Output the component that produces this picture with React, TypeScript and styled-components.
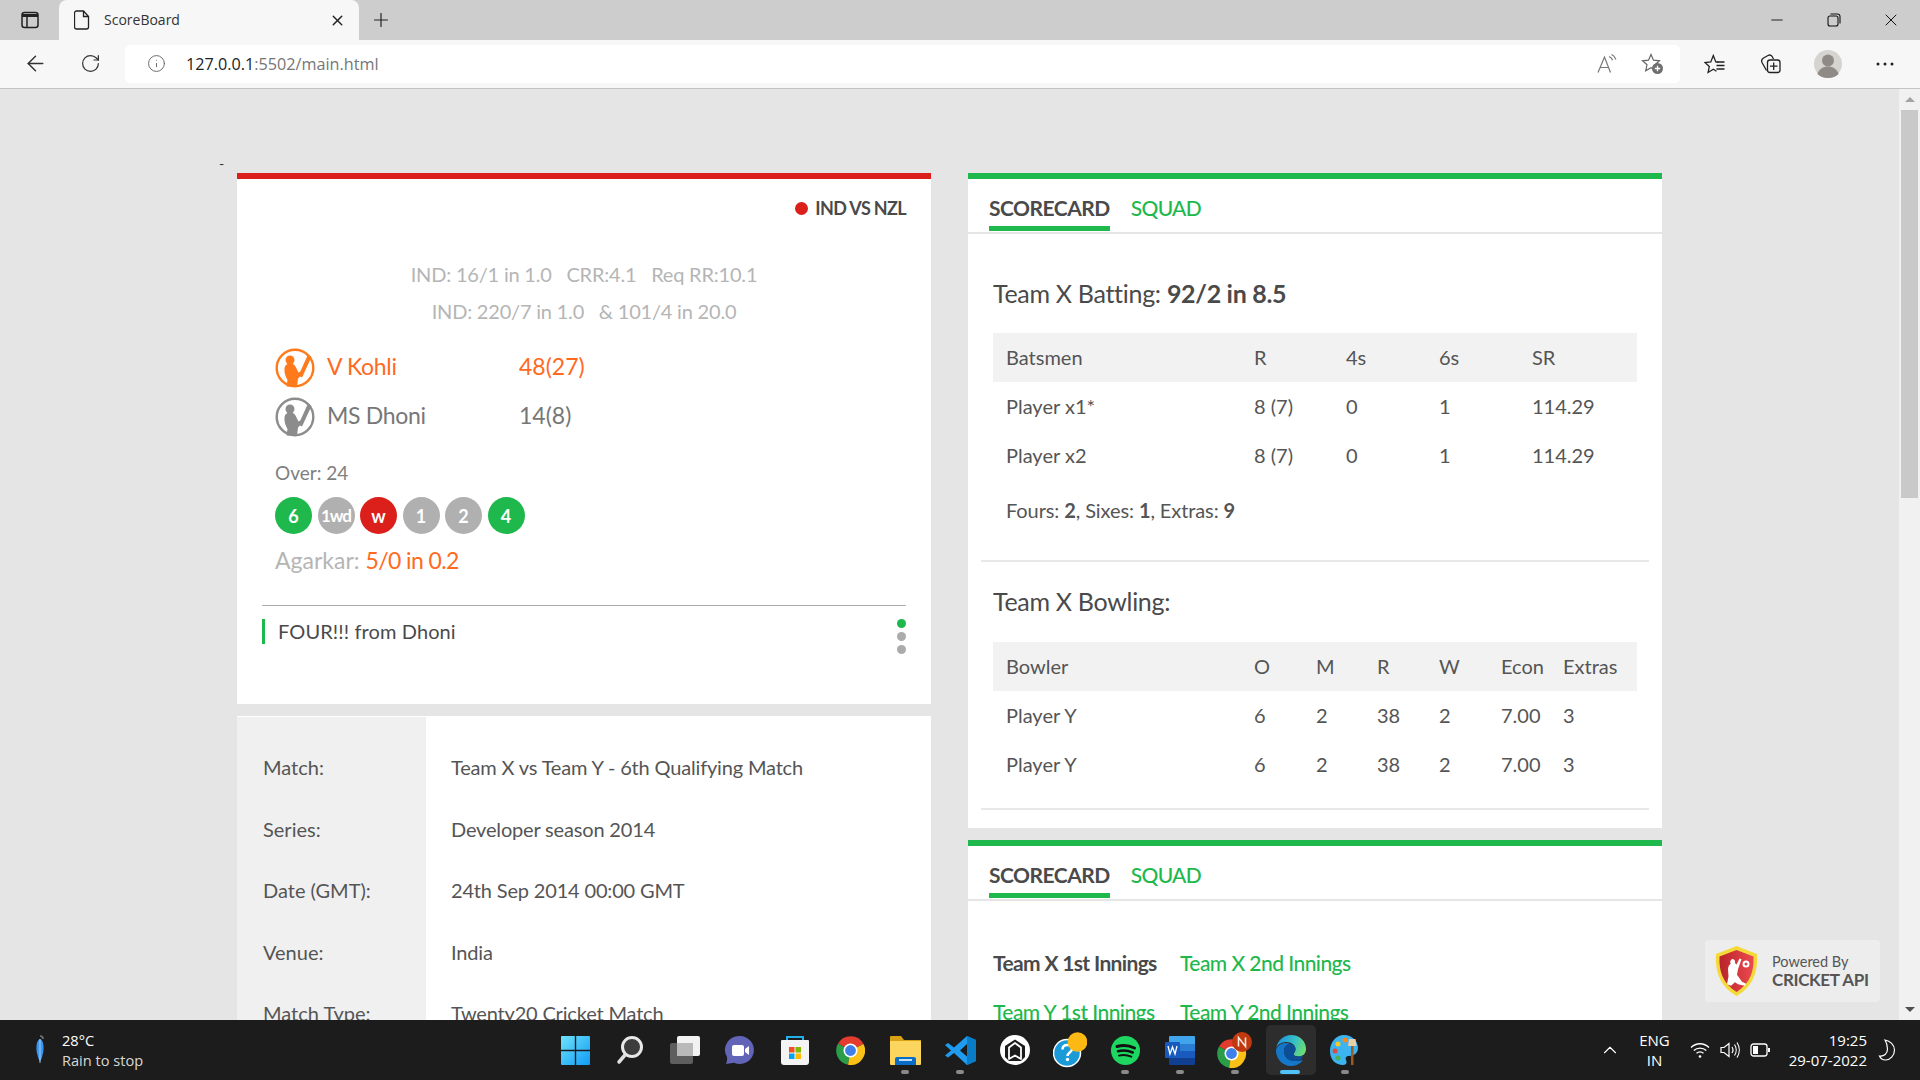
import React from "react";
import styled, { createGlobalStyle } from "styled-components";
import { ArrowLeft, RotateCw, Info, X, Plus, Minus, ChevronUp } from "lucide-react";

const GREEN = "#1fb84d";
const RED = "#db1f1a";
const ORANGE = "#ff6a1f";

const GlobalStyle = createGlobalStyle`
  html, body {
    margin: 0;
    padding: 0;
    height: 100%;
    overflow: hidden;
    background: #e5e5e5;
  }
  * {
    box-sizing: border-box;
  }
`;

const Shell = styled.div`
  width: 100vw;
  height: 100vh;
  display: flex;
  flex-direction: column;
  overflow: hidden;
  font-family: "Lato", "Liberation Sans", sans-serif;
`;

/* browser chrome */
const TabStrip = styled.div`
  height: 40px;
  flex: none;
  display: flex;
  align-items: flex-end;
  background: #cdcdcd;
  font-family: "Open Sans", "Liberation Sans", sans-serif;
`;

const StripButton = styled.div<{ $w: number }>`
  width: ${(p) => p.$w}px;
  height: 40px;
  flex: none;
  display: flex;
  align-items: center;
  justify-content: center;
  color: #222;
`;

const BrowserTab = styled.div`
  width: 300px;
  height: 40px;
  flex: none;
  display: flex;
  align-items: center;
  padding: 0 13px 0 15px;
  background: #f7f7f7;
  border-radius: 8px 8px 0 0;
  color: #333;
  font-size: 14px;
`;

const TabTitle = styled.span`
  margin: 0 0 2px 14px;
  flex: 1;
`;

const WindowButtons = styled.div`
  margin-left: auto;
  display: flex;
  align-items: center;
  height: 40px;
`;

const WindowButton = styled.div<{ $w: number }>`
  width: ${(p) => p.$w}px;
  display: flex;
  justify-content: center;
  color: #111;
`;

const Toolbar = styled.div`
  height: 49px;
  flex: none;
  display: flex;
  align-items: center;
  background: #f7f7f7;
  border-bottom: 1px solid #c4c4c4;
  padding-bottom: 1px;
`;

const ToolButton = styled.div<{ $w: number }>`
  width: ${(p) => p.$w}px;
  flex: none;
  display: flex;
  justify-content: center;
  align-items: center;
  color: #333;
`;

const AddressBar = styled.div`
  width: 1555px;
  height: 38px;
  flex: none;
  display: flex;
  align-items: center;
  margin-left: 15px;
  padding: 0 16px 0 22px;
  background: #fff;
  border-radius: 5px;
  font-family: "Open Sans", "Liberation Sans", sans-serif;
  font-size: 16.2px;
  color: #767676;
`;

const UrlHost = styled.span`
  margin-left: 20px;
  color: #222;
`;

const AddressActions = styled.div`
  margin-left: auto;
  display: flex;
  align-items: center;
  gap: 22px;
`;

/* page */
const Viewport = styled.div`
  flex: 1;
  min-height: 0;
  display: flex;
  position: relative;
  overflow: hidden;
  background: #e5e5e5;
`;

const Page = styled.main`
  flex: 1;
  min-width: 0;
  padding: 68px 0 0 237px;
  overflow: hidden;
`;

const Dash = styled.div`
  height: 16px;
  margin-left: -18px;
  font-size: 14px;
  line-height: 14px;
  color: #333;
`;

const Columns = styled.div`
  display: flex;
  gap: 37px;
  align-items: flex-start;
`;

const Column = styled.div`
  width: 694px;
  flex: none;
  display: flex;
  flex-direction: column;
  gap: 12px;
`;

const Scrollbar = styled.div`
  width: 21px;
  flex: none;
  display: flex;
  flex-direction: column;
  align-items: center;
  background: #f1f1f1;
`;

const ScrollThumb = styled.div`
  width: 17px;
  height: 388px;
  background: #c9c9c9;
`;

const ScrollArrow = styled.div<{ $up?: boolean }>`
  height: 21px;
  flex: none;
  display: flex;
  align-items: center;
  &::before {
    content: "";
    border-left: 5px solid transparent;
    border-right: 5px solid transparent;
    ${(p) =>
      p.$up ? "border-bottom: 5px solid #a3a3a3;" : "border-top: 5px solid #505050;"}
  }
`;

const ScrollSpacer = styled.div`
  flex: 1;
`;

const Card = styled.section<{ $accent?: string }>`
  background: #fff;
  ${(p) => p.$accent && `border-top: 6px solid ${p.$accent};`}
`;

const MatchBody = styled.div`
  padding: 17px 25px 50px;
  color: #555;
`;

const LiveTag = styled.div`
  display: flex;
  justify-content: flex-end;
  align-items: center;
  gap: 7px;
  height: 24px;
  font-size: 18px;
  font-weight: 700;
  letter-spacing: -0.65px;
  color: #4a4a4a;
`;

const LiveDot = styled.span`
  width: 13px;
  height: 13px;
  border-radius: 50%;
  background: ${RED};
`;

const ScoreLines = styled.div`
  margin-top: 36px;
  text-align: center;
  color: #b5b5b5;
  font-size: 20px;
  line-height: 37px;
  letter-spacing: -0.2px;
  white-space: pre;
`;

const Players = styled.div`
  margin-top: 13px;
  padding-left: 13px;
`;

const PlayerRow = styled.div<{ $on?: boolean }>`
  height: 49px;
  display: flex;
  align-items: center;
  font-size: 23px;
  color: ${(p) => (p.$on ? ORANGE : "#777")};
`;

const PlayerName = styled.span`
  width: 192px;
  margin: 0 0 3px 12px;
  letter-spacing: -0.3px;
`;

const PlayerScore = styled.span`
  margin-bottom: 3px;
`;

const OverLabel = styled.div`
  margin: 20px 0 0 13px;
  font-size: 19px;
  line-height: 24px;
  color: #808080;
`;

const Balls = styled.div`
  display: flex;
  gap: 5.5px;
  margin: 12px 0 0 13px;
`;

const Ball = styled.span<{ $bg: string; $small?: boolean }>`
  width: 37px;
  height: 37px;
  border-radius: 50%;
  display: flex;
  align-items: center;
  justify-content: center;
  background: ${(p) => p.$bg};
  color: #fff;
  font-weight: 700;
  font-size: ${(p) => (p.$small ? "17px" : "18px")};
  letter-spacing: ${(p) => (p.$small ? "-1px" : "0")};
`;

const BowlerLine = styled.div`
  margin: 11px 0 0 13px;
  font-size: 23px;
  line-height: 30px;
  color: #b5b5b5;
`;

const Hot = styled.span`
  color: ${ORANGE};
  letter-spacing: -0.6px;
`;

const FeedRow = styled.div`
  margin-top: 30px;
  padding-top: 13px;
  border-top: 1px solid #ababab;
  display: flex;
  justify-content: space-between;
  align-items: flex-start;
`;

const FeedText = styled.div`
  height: 25px;
  padding-left: 13px;
  border-left: 3px solid ${GREEN};
  font-size: 20px;
  line-height: 25px;
  letter-spacing: 0.1px;
  color: #4a4a4a;
`;

const Pager = styled.div`
  display: flex;
  flex-direction: column;
  gap: 4px;
`;

const PagerDot = styled.span<{ $on?: boolean }>`
  width: 9px;
  height: 9px;
  border-radius: 50%;
  background: ${(p) => (p.$on ? GREEN : "#ababab")};
`;

const InfoGrid = styled.div`
  display: grid;
  grid-template-columns: 189px 1fr;
  padding-top: 1px;
  background: #fff;
`;

const InfoColumn = styled.div<{ $label?: boolean }>`
  padding: 19.5px 0 0 ${(p) => (p.$label ? "26px" : "25px")};
  background: ${(p) => (p.$label ? "#f0f0f0" : "#fff")};
  font-size: 20px;
  letter-spacing: ${(p) => (p.$label ? "0" : "-0.17px")};
  color: #555;
`;

const InfoCell = styled.div`
  height: 61.5px;
  display: flex;
  align-items: center;
`;

const Tabs = styled.div`
  height: 55px;
  display: flex;
  gap: 21px;
  padding-left: 21px;
  border-bottom: 2px solid #e5e5e5;
`;

const TabLink = styled.div<{ $on?: boolean }>`
  height: 52px;
  padding-top: 11px;
  font-size: 21px;
  line-height: 36px;
  font-weight: ${(p) => (p.$on ? 700 : 500)};
  letter-spacing: ${(p) => (p.$on ? "-0.5px" : "-0.7px")};
  color: ${(p) => (p.$on ? "#4a4a4a" : GREEN)};
  border-bottom: ${(p) => (p.$on ? `5px solid ${GREEN}` : "none")};
`;

const Section = styled.div<{ $top: number; $bottom?: number }>`
  padding: ${(p) => p.$top}px 25px ${(p) => p.$bottom ?? 0}px;
`;

const SectionTitle = styled.h2`
  margin: 0;
  font-size: 25px;
  line-height: 30px;
  font-weight: 400;
  letter-spacing: -0.3px;
  color: #4a4a4a;
`;

const Strong = styled.strong`
  font-weight: 700;
`;

const ScoreTable = styled.div<{ $mt: number }>`
  margin-top: ${(p) => p.$mt}px;
  font-size: 20px;
  color: #555;
`;

const TableRow = styled.div<{ $cols: string; $head?: boolean }>`
  height: 49px;
  display: grid;
  grid-template-columns: ${(p) => p.$cols};
  align-items: center;
  padding: 0 0 2px 13px;
  background: ${(p) => (p.$head ? "#f2f2f2" : "#fff")};
`;

const Summary = styled.div`
  margin-top: 15px;
  padding-left: 13px;
  font-size: 20px;
  line-height: 30px;
  letter-spacing: -0.1px;
  color: #555;
`;

const Rule = styled.hr<{ $mt: number }>`
  height: 2px;
  margin: ${(p) => p.$mt}px 13px 0;
  border: 0;
  background: #e8e8e8;
`;

const InningsRow = styled.div`
  height: 49px;
  display: flex;
  align-items: center;
  gap: 25px;
  font-size: 21px;
  white-space: nowrap;
`;

const InningsLink = styled.span<{ $on?: boolean }>`
  width: 162px;
  font-weight: ${(p) => (p.$on ? 700 : 500)};
  letter-spacing: ${(p) => (p.$on ? "-0.65px" : "-0.55px")};
  color: ${(p) => (p.$on ? "#4a4a4a" : GREEN)};
`;

const PoweredBadge = styled.div`
  position: absolute;
  right: 40px;
  bottom: 18px;
  width: 175px;
  height: 62px;
  display: flex;
  align-items: center;
  gap: 14px;
  padding-left: 10px;
  background: #ededed;
  border-radius: 4px;
  color: #555;
`;

const BadgeText = styled.div`
  display: flex;
  flex-direction: column;
  font-size: 14.5px;
  line-height: 18px;
`;

const BadgeStrong = styled.span`
  font-size: 17px;
  font-weight: 700;
  letter-spacing: -0.35px;
`;

/* taskbar */
const Taskbar = styled.footer`
  height: 60px;
  flex: none;
  position: relative;
  display: flex;
  align-items: center;
  justify-content: center;
  background: #1c1c1c;
  color: #fff;
  font-family: "Open Sans", "Liberation Sans", sans-serif;
  font-size: 15px;
`;

const Weather = styled.div`
  position: absolute;
  left: 32px;
  top: 0;
  height: 60px;
  display: flex;
  align-items: center;
  gap: 14px;
  font-size: 14.6px;
`;

const WeatherText = styled.div`
  display: flex;
  flex-direction: column;
  line-height: 20px;
`;

const WeatherSub = styled.span`
  color: #d8d8d8;
`;

const TaskItem = styled.div<{ $active?: boolean }>`
  position: relative;
  width: 55px;
  height: 60px;
  flex: none;
  display: flex;
  align-items: center;
  justify-content: center;
  &::before {
    content: "";
    position: absolute;
    left: 3px;
    right: 2px;
    top: 5px;
    bottom: 5px;
    border-radius: 5px;
    background: ${(p) => (p.$active ? "#2d2d2d" : "transparent")};
  }
  & > svg {
    position: relative;
  }
`;

const RunDot = styled.span<{ $active?: boolean }>`
  position: absolute;
  bottom: 6px;
  left: 50%;
  width: ${(p) => (p.$active ? "20px" : "8px")};
  height: 4px;
  margin-left: ${(p) => (p.$active ? "-10px" : "-4px")};
  border-radius: 2px;
  background: ${(p) => (p.$active ? "#4fc3f7" : "#8a8a8a")};
`;

const Tray = styled.div`
  position: absolute;
  right: 24px;
  top: 0;
  height: 60px;
  display: flex;
  align-items: center;
`;

const TrayLines = styled.div<{ $right?: boolean }>`
  display: flex;
  flex-direction: column;
  align-items: ${(p) => (p.$right ? "flex-end" : "center")};
  line-height: 20px;
  margin: ${(p) => (p.$right ? "0 11px 0 19px" : "0 20px 0 18px")};
`;

const TrayIcons = styled.div`
  display: flex;
  align-items: center;
  gap: 10px;
`;

/* drawings */
const BatterIcon = ({ color }: { color: string }) => (
  <svg width="40" height="40" viewBox="0 0 40 40">
    <circle cx="20" cy="20" r="18.300" fill="none" stroke={color} strokeWidth="2.400" />
    <circle cx="15" cy="12" r="4.500" fill={color} />
    <path
      d="M9.500 20c.5-3 2.500-4.500 5.500-4.500s5 1.500 6 4l2.500 5 3-1.500 1 3-4.500 4.500-1 8.500-10.500-.5 1-6.500c-2-3.500-3.500-7.500-3-12z"
      fill={color}
    />
    <path d="M33 6.500l3.500 2.500-9.500 20.500-3.500-2z" fill={color} />
  </svg>
);

const ShieldLogo = () => (
  <svg width="43" height="50" viewBox="0 0 43 50">
    <defs>
      <linearGradient id="shieldRed" x1="0" x2="1" y1="0" y2="0">
        <stop offset="0" stopColor="#b8232a" />
        <stop offset="1" stopColor="#ec4a4f" />
      </linearGradient>
    </defs>
    <path d="M21.500 0L42 8c1 16-3 32-20.500 42C4 40 0 24 1 8z" fill="#f4d93a" />
    <path d="M21.500 4L38.500 10.500c.7 14-3 27-17 35.500C7.500 37.500 3.800 24.500 4.500 10.500z" fill="url(#shieldRed)" />
    <path
      d="M17 13c2.500 0 3.500 2 3 4l1.500 1.500 3-6 2 .8-3.500 10-1 5.500 5 7 4 2-1 2-7-1.500-3-2-4 3.500-4-1.500 1.500-8-.5-7c.2-3 1.500-5 2.800-5.500-1-1-.9-3.300 1.200-4.800z"
      fill="#fff"
    />
    <circle cx="31" cy="18" r="2.500" fill="none" stroke="#fff" strokeWidth="2" />
  </svg>
);

const SidebarIcon = () => (
  <svg width="18" height="18" viewBox="0 0 18 18" fill="none" stroke="#222" strokeWidth="1.500">
    <rect x="1" y="1.500" width="16" height="15" rx="2.500" />
    <path d="M1 4.500h16" strokeWidth="3" />
    <path d="M6 5v11" />
  </svg>
);

const DocIcon = () => (
  <svg width="16" height="20" viewBox="0 0 16 20" fill="none" stroke="#222" strokeWidth="1.300">
    <path d="M2.500 1h7l5 5.500v10.500a2 2 0 0 1-2 2h-10a2 2 0 0 1-2-2v-14a2 2 0 0 1 2-2z" />
    <path d="M9.500 1v5.500h5" />
  </svg>
);

const RestoreIcon = () => (
  <svg width="14" height="14" viewBox="0 0 14 14" fill="none" stroke="#111" strokeWidth="1.100">
    <rect x="1" y="3" width="10" height="10" rx="2" />
    <path d="M3.500 1h7a2.500 2.500 0 0 1 2.500 2.500v7" />
  </svg>
);

const ReadAloudIcon = () => (
  <svg width="22" height="20" viewBox="0 0 22 20" fill="none" stroke="#777" strokeWidth="1.200">
    <path d="M1 18.500L7.500 3l6 15.500M3.300 13.500h8.500" />
    <path d="M12 2.500c1.800.7 3 2 3.600 3.800M14.500 0.500c2.200 1 3.700 2.800 4.400 5" />
  </svg>
);

const StarPlusIcon = () => (
  <svg width="23" height="22" viewBox="0 0 23 22">
    <path
      d="M10 1.500l2.500 5.700 6 .6-4.500 4 1.300 6-5.300-3-5.300 3 1.300-6-4.500-4 6-.6z"
      fill="none"
      stroke="#666"
      strokeWidth="1.200"
    />
    <circle cx="16.500" cy="15.500" r="5.500" fill="#6e6e6e" />
    <path d="M16.500 12.800v5.400M13.800 15.500h5.400" stroke="#fff" strokeWidth="1.300" />
  </svg>
);

const FavoritesIcon = () => (
  <svg width="22" height="20" viewBox="0 0 22 20" fill="none" stroke="#222" strokeWidth="1.300">
    <path d="M14.300 8.200l-2.500-.3L9.300 1.500 6.800 7.900 1 8.500l4.300 4-1.200 6 5.200-3.200 3.200 2" />
    <path d="M12.500 8h8M12.500 11.500h8M12.500 15h8" />
  </svg>
);

const CollectionsIcon = () => (
  <svg width="21" height="21" viewBox="0 0 21 21" fill="none" stroke="#222" strokeWidth="1.300">
    <path d="M6.500 17.500L2 9.500c-1-2 0-3.500 1.500-4.500L8 2.500c1.500-.8 3-.5 4 .8L13.500 6" />
    <rect x="7.500" y="7" width="12.500" height="12.500" rx="2.500" />
    <path d="M13.700 9.500v7.500M10 13.200h7.500" />
  </svg>
);

const AvatarIcon = () => (
  <svg width="28" height="28" viewBox="0 0 28 28">
    <circle cx="14" cy="14" r="14" fill="#d6d4d0" />
    <circle cx="14" cy="10.500" r="6" fill="#8f8a85" />
    <path d="M3.500 24c1.500-5 5.500-7.500 10.500-7.500s9 2.500 10.500 7.500c-2.500 2.500-6 4-10.500 4s-8-1.500-10.500-4z" fill="#8f8a85" />
  </svg>
);

const DotsIcon = () => (
  <svg width="18" height="4" viewBox="0 0 18 4" fill="#222">
    <circle cx="2" cy="2" r="1.500" />
    <circle cx="9" cy="2" r="1.500" />
    <circle cx="16" cy="2" r="1.500" />
  </svg>
);

const UmbrellaIcon = () => (
  <svg width="16" height="30" viewBox="0 0 16 30">
    <path d="M8 1c2 0 3 1 3 3" fill="none" stroke="#777" strokeWidth="1.500" />
    <path d="M8 4c-2 .5-4 4-3.500 11 .3 4 2 9 3.500 12 1.500-3 3.200-8 3.500-12 .5-7-1.500-10.500-3.500-11z" fill="#3a95ee" />
    <path d="M8 4v24" stroke="#bfe0ff" strokeWidth="0.800" />
  </svg>
);

const WindowsIcon = () => (
  <svg width="29" height="29" viewBox="0 0 29 29">
    <defs>
      <linearGradient id="winBlue" x1="0" x2="1" y1="0" y2="1">
        <stop offset="0" stopColor="#6fe3fb" />
        <stop offset="1" stopColor="#0f9bf5" />
      </linearGradient>
    </defs>
    <path d="M1 0h12.800v13.800H0V1a1 1 0 0 1 1-1zM15.200 0H28a1 1 0 0 1 1 1v12.800H15.200zM0 15.200h13.800V29H1a1 1 0 0 1-1-1zM15.200 15.200H29V28a1 1 0 0 1-1 1H15.200z" fill="url(#winBlue)" />
  </svg>
);

const SearchIcon = () => (
  <svg width="28" height="30" viewBox="0 0 28 30" fill="none">
    <circle cx="16" cy="12" r="9.500" fill="#3c3c3c" stroke="#e8e8e8" strokeWidth="3" />
    <path d="M9 20L3 27" stroke="#e0e0e0" strokeWidth="3.500" strokeLinecap="round" />
  </svg>
);

const TaskViewIcon = () => (
  <svg width="30" height="28" viewBox="0 0 30 28">
    <rect x="7" y="0" width="23" height="20" rx="2" fill="#f2f2f2" />
    <rect x="0" y="7" width="23" height="21" rx="2" fill="#5e5e5e" />
    <rect x="7" y="7" width="16" height="13" fill="#b9b9b9" />
  </svg>
);

const TeamsIcon = () => (
  <svg width="30" height="30" viewBox="0 0 30 30">
    <path d="M15 1a14 14 0 1 1-6 26.700L1 29c1-2 1.300-4.500 1-7A14 14 0 0 1 15 1z" fill="#6264b8" />
    <rect x="7" y="10" width="12" height="11" rx="2" fill="#fff" />
    <path d="M20 14l4-3v9l-4-3z" fill="#fff" />
  </svg>
);

const StoreIcon = () => (
  <svg width="30" height="30" viewBox="0 0 30 30">
    <path d="M7 6V2h16v4" fill="none" stroke="#22aee8" strokeWidth="2" />
    <path d="M2 5h26a1 1 0 0 1 1 1v21a3 3 0 0 1-3 3H4a3 3 0 0 1-3-3V6a1 1 0 0 1 1-1z" fill="#f4f4f4" />
    <rect x="9" y="12" width="5.500" height="5.500" fill="#f25022" />
    <rect x="15.500" y="12" width="5.500" height="5.500" fill="#7fba00" />
    <rect x="9" y="18.500" width="5.500" height="5.500" fill="#00a4ef" />
    <rect x="15.500" y="18.500" width="5.500" height="5.500" fill="#ffb900" />
  </svg>
);

const ChromeIcon = () => (
  <svg width="29" height="29" viewBox="0 0 29 29">
    <path d="M14.500 14.500L2 7.500A14.500 14.500 0 0 1 27.500 8z" fill="#e33b2e" />
    <path d="M14.500 14.500L2 7.500A14.500 14.500 0 0 0 12 28.800z" fill="#2a9d48" />
    <path d="M14.500 14.500L27.500 8A14.500 14.500 0 0 1 12 28.800z" fill="#fbc116" />
    <circle cx="14.500" cy="14.500" r="7" fill="#fff" />
    <circle cx="14.500" cy="14.500" r="5.400" fill="#3f7fe8" />
  </svg>
);

const FolderIcon = () => (
  <svg width="31" height="29" viewBox="0 0 31 29">
    <path d="M1 0h10l3 4h17v4H0V1a1 1 0 0 1 1-1z" fill="#d9a214" />
    <path d="M0 5h30a1 1 0 0 1 1 1v22a1 1 0 0 1-1 1H1a1 1 0 0 1-1-1z" fill="#fcd55f" />
    <path d="M5 29v-6a2 2 0 0 1 2-2h17a2 2 0 0 1 2 2v6z" fill="#0a6cc6" />
    <rect x="9" y="23" width="13" height="2" fill="#bfe0fa" />
  </svg>
);

const VsCodeIcon = () => (
  <svg width="31" height="31" viewBox="0 0 31 31">
    <path d="M22 1l9 4v21l-9 4-13-12-6 4.500-3-2 6-5-6-5.500 3-2 6 4.500z" fill="#1f9cf0" />
    <path d="M22 1l9 4v21l-9 4z" fill="#0a7cc6" />
    <path d="M22 9l-7 6.500 7 6z" fill="#1c1c1c" />
  </svg>
);

const HubIcon = () => (
  <svg width="30" height="30" viewBox="0 0 30 30">
    <circle cx="15" cy="15" r="15" fill="#fff" />
    <path d="M15 4.500L25 11v11l-4 4h-12l-4-4V11z" fill="#1c1c1c" />
    <path
      d="M9 24V12.500L15 8l6 4.500V24l-6-3.500z"
      fill="#1c1c1c"
      stroke="#fff"
      strokeWidth="1.800"
      strokeLinejoin="round"
    />
  </svg>
);

const HelpIcon = () => (
  <svg width="34" height="36" viewBox="0 0 34 36">
    <circle cx="14" cy="21" r="13.500" fill="#1a9bd7" stroke="#fff" strokeWidth="1.500" />
    <path d="M9.500 17.500c0-3 2-4.500 4.800-4.500 2.800 0 4.700 1.500 4.700 4 0 3.500-4.500 3.500-4.500 7" fill="none" stroke="#fff" strokeWidth="2.500" />
    <circle cx="14.500" cy="27.500" r="1.700" fill="#fff" />
    <circle cx="24.500" cy="10" r="9.800" fill="#fdb913" />
  </svg>
);

const SpotifyIcon = () => (
  <svg width="29" height="29" viewBox="0 0 29 29" fill="none">
    <circle cx="14.500" cy="14.500" r="14.500" fill="#1ed760" />
    <path d="M6 10.500c6-1.800 12-1.300 17.500 1.500" stroke="#111" strokeWidth="3" strokeLinecap="round" />
    <path d="M7 15.200c5-1.400 10-1 14.800 1.300" stroke="#111" strokeWidth="2.500" strokeLinecap="round" />
    <path d="M8 19.600c4.200-1 8.200-.7 12.300 1.100" stroke="#111" strokeWidth="2" strokeLinecap="round" />
  </svg>
);

const WordIcon = () => (
  <svg width="30" height="29" viewBox="0 0 30 29">
    <path d="M5 0h24a1 1 0 0 1 1 1v7H4V1a1 1 0 0 1 1-1z" fill="#41a5ee" />
    <rect x="4" y="8" width="26" height="7" fill="#2b7cd3" />
    <rect x="4" y="15" width="26" height="7" fill="#185abd" />
    <path d="M4 22h26v6a1 1 0 0 1-1 1H5a1 1 0 0 1-1-1z" fill="#103f91" />
    <rect x="0" y="6" width="15" height="16" rx="1" fill="#185abd" />
    <path d="M3 10l2 8 2.500-7 2.500 7 2-8" fill="none" stroke="#fff" strokeWidth="1.300" />
  </svg>
);

const ChromeBadgeIcon = () => (
  <svg width="36" height="36" viewBox="0 0 36 36">
    <g transform="translate(0 7)">
      <path d="M14.500 14.500L2 7.500A14.500 14.500 0 0 1 27.500 8z" fill="#e33b2e" />
      <path d="M14.500 14.500L2 7.500A14.500 14.500 0 0 0 12 28.800z" fill="#2a9d48" />
      <path d="M14.500 14.500L27.500 8A14.500 14.500 0 0 1 12 28.800z" fill="#fbc116" />
      <circle cx="14.500" cy="14.500" r="7" fill="#fff" />
      <circle cx="14.500" cy="14.500" r="5.400" fill="#3f7fe8" />
    </g>
    <circle cx="25" cy="10" r="10" fill="#c0390f" />
    <path d="M21.500 14.500v-9l7 9v-9" fill="none" stroke="#f5e8e0" strokeWidth="1.600" />
  </svg>
);

const EdgeIcon = () => (
  <svg width="31" height="31" viewBox="0 0 31 31">
    <defs>
      <linearGradient id="edgeTop" x1="0" x2="1" y1="0.300" y2="0.600">
        <stop offset="0" stopColor="#1f8fdc" />
        <stop offset="0.550" stopColor="#35c0c8" />
        <stop offset="1" stopColor="#6fdc6f" />
      </linearGradient>
    </defs>
    <path
      d="M1 13C3 5 9 0 16 0c8.500 0 15 6 15 14 0 4.500-3 7.500-7.500 7.500-3 0-5-1-5-2.200 0-1 2-2 2-5.300 0-4-4-7-9-7C7 7 3 9 1 13z"
      fill="url(#edgeTop)"
    />
    <path
      d="M1 13C0 23 7 31 16 31c5 0 9-2 12-6-3 1-5.500 1.300-8 1-7-.5-11-5-11-10 0-4 2.500-6.500 5.500-7.500-1-.5-2.500-.5-3.500-.5-4 0-8 2-10 6.500z"
      fill="#1577c9"
    />
    <path
      d="M9 16c0-4 2.500-6.500 5.500-7.500 3.500.5 6 3 6 5.500 0 2-2 3.500-2 5.300 0 1.500 2.500 2.200 5 2.200 2 0 3.700-.7 4.500-1.500-.5 2-1 3.500-2 5-3 1-5.500 1.300-8 1-7-.5-9-5.500-9-10z"
      fill="#0d4f96"
    />
  </svg>
);

const PaintIcon = () => (
  <svg width="30" height="32" viewBox="0 0 30 32">
    <path d="M14 1C6 1 0 8 0 17s6 14 13 14c4 0 4-3 3-5s0-4 3-4c5 0 9-3 9-8C28 7 22 1 14 1z" fill="#3cb4f0" />
    <circle cx="8" cy="10" r="2.500" fill="#f9c623" />
    <circle cx="5" cy="17" r="2.500" fill="#e2483d" />
    <circle cx="8" cy="24" r="2.500" fill="#4caf50" />
    <circle cx="15" cy="6" r="2.500" fill="#f58a1f" />
    <rect x="21" y="11" width="2.500" height="20" fill="#9a5b25" />
    <path d="M19 5h6.500l1 7h-8.500z" fill="#e9cfa8" />
  </svg>
);

const WifiIcon = () => (
  <svg width="20" height="18" viewBox="0 0 20 18" fill="none" stroke="#fff" strokeWidth="1.300">
    <path d="M1 6.500c5-5 13-5 18 0M3.800 9.500c3.500-3.300 9-3.300 12.500 0M6.500 12.300c2-1.800 5-1.800 7 0" />
    <circle cx="10" cy="15.500" r="1.300" fill="#fff" stroke="none" />
  </svg>
);

const SpeakerIcon = () => (
  <svg width="20" height="20" viewBox="0 0 20 20" fill="none" stroke="#fff" strokeWidth="1.200">
    <path d="M1 7.500h3L9 3.500v13l-5-4H1z" />
    <path d="M12 7c1.200 1.800 1.200 4.200 0 6M14.500 4.500c2.200 3.200 2.200 7.800 0 11M17 2.500c3 4.500 3 10.500 0 15" />
  </svg>
);

const BatteryIcon = () => (
  <svg width="20" height="14" viewBox="0 0 20 14" fill="none">
    <rect x="1" y="1" width="16" height="12" rx="2.500" stroke="#fff" strokeWidth="1.300" />
    <rect x="3" y="3" width="5" height="8" fill="#fff" />
    <rect x="18" y="5" width="2" height="4" fill="#fff" />
  </svg>
);

const MoonIcon = () => (
  <svg width="18" height="22" viewBox="0 0 18 22" fill="none" stroke="#fff" strokeWidth="1.200">
    <path d="M7 1c5 1 9.500 4.500 9.500 10S12 21 7.500 21C4.500 21 2.500 19.500 1.500 17c4.500.5 8-2 8-7 0-3.500-1-6.500-2.500-9z" />
  </svg>
);

const BATTING_COLS = "248px 92px 93px 93px 118px";
const BOWLING_COLS = "248px 62px 61px 62px 62px 62px 87px";

const batting = [
  ["Player x1*", "8 (7)", "0", "1", "114.29"],
  ["Player x2", "8 (7)", "0", "1", "114.29"],
];

const bowling = [
  ["Player Y", "6", "2", "38", "2", "7.00", "3"],
  ["Player Y", "6", "2", "38", "2", "7.00", "3"],
];

const balls = [
  { label: "6", bg: GREEN },
  { label: "1wd", bg: "#b0b0b0", small: true },
  { label: "w", bg: RED },
  { label: "1", bg: "#b0b0b0" },
  { label: "2", bg: "#b0b0b0" },
  { label: "4", bg: GREEN },
];

const info = [
  ["Match:", "Team X vs Team Y - 6th Qualifying Match"],
  ["Series:", "Developer season 2014"],
  ["Date (GMT):", "24th Sep 2014 00:00 GMT"],
  ["Venue:", "India"],
  ["Match Type:", "Twenty20 Cricket Match"],
];

const taskItems = [
  { icon: <WindowsIcon /> },
  { icon: <SearchIcon /> },
  { icon: <TaskViewIcon /> },
  { icon: <TeamsIcon /> },
  { icon: <StoreIcon /> },
  { icon: <ChromeIcon /> },
  { icon: <FolderIcon />, running: true },
  { icon: <VsCodeIcon />, running: true },
  { icon: <HubIcon /> },
  { icon: <HelpIcon /> },
  { icon: <SpotifyIcon />, running: true },
  { icon: <WordIcon />, running: true },
  { icon: <ChromeBadgeIcon />, running: true },
  { icon: <EdgeIcon />, running: true, active: true },
  { icon: <PaintIcon />, running: true },
];

const CardTabs = () => (
  <Tabs>
    <TabLink $on>SCORECARD</TabLink>
    <TabLink>SQUAD</TabLink>
  </Tabs>
);

const App = () => {
  return (
    <Shell>
      <GlobalStyle />
      <TabStrip>
        <StripButton $w={59}>
          <SidebarIcon />
        </StripButton>
        <BrowserTab>
          <DocIcon />
          <TabTitle>ScoreBoard</TabTitle>
          <X size={17} color="#222" />
        </BrowserTab>
        <StripButton $w={44}>
          <Plus size={22} strokeWidth={1.3} />
        </StripButton>
        <WindowButtons>
          <WindowButton $w={57}>
            <Minus size={18} strokeWidth={1.2} />
          </WindowButton>
          <WindowButton $w={57}>
            <RestoreIcon />
          </WindowButton>
          <WindowButton $w={58}>
            <X size={20} strokeWidth={1.2} />
          </WindowButton>
        </WindowButtons>
      </TabStrip>

      <Toolbar>
        <ToolButton $w={70}>
          <ArrowLeft size={25} strokeWidth={1.4} />
        </ToolButton>
        <ToolButton $w={40}>
          <RotateCw size={21} strokeWidth={1.4} />
        </ToolButton>
        <AddressBar>
          <Info size={19} strokeWidth={1.2} color="#666" />
          <UrlHost>127.0.0.1</UrlHost>:5502/main.html
          <AddressActions>
            <ReadAloudIcon />
            <StarPlusIcon />
          </AddressActions>
        </AddressBar>
        <ToolButton $w={70}>
          <FavoritesIcon />
        </ToolButton>
        <ToolButton $w={40}>
          <CollectionsIcon />
        </ToolButton>
        <ToolButton $w={76}>
          <AvatarIcon />
        </ToolButton>
        <ToolButton $w={38}>
          <DotsIcon />
        </ToolButton>
      </Toolbar>

      <Viewport>
        <Page>
          <Dash>-</Dash>
          <Columns>
            <Column>
              <Card $accent={RED}>
                <MatchBody>
                  <LiveTag>
                    <LiveDot />
                    IND VS NZL
                  </LiveTag>
                  <ScoreLines>
                    <div>{"IND: 16/1 in 1.0   CRR:4.1   Req RR:10.1"}</div>
                    <div>{"IND: 220/7 in 1.0   & 101/4 in 20.0"}</div>
                  </ScoreLines>
                  <Players>
                    <PlayerRow $on>
                      <BatterIcon color="#ff7a1a" />
                      <PlayerName>V Kohli</PlayerName>
                      <PlayerScore>48(27)</PlayerScore>
                    </PlayerRow>
                    <PlayerRow>
                      <BatterIcon color="#8c8c8c" />
                      <PlayerName>MS Dhoni</PlayerName>
                      <PlayerScore>14(8)</PlayerScore>
                    </PlayerRow>
                  </Players>
                  <OverLabel>Over: 24</OverLabel>
                  <Balls>
                    {balls.map((b) => (
                      <Ball key={b.label} $bg={b.bg} $small={b.small}>
                        {b.label}
                      </Ball>
                    ))}
                  </Balls>
                  <BowlerLine>
                    Agarkar: <Hot>5/0 in 0.2</Hot>
                  </BowlerLine>
                  <FeedRow>
                    <FeedText>FOUR!!! from Dhoni</FeedText>
                    <Pager>
                      <PagerDot $on />
                      <PagerDot />
                      <PagerDot />
                    </Pager>
                  </FeedRow>
                </MatchBody>
              </Card>
              <InfoGrid>
                <InfoColumn $label>
                  {info.map(([label]) => (
                    <InfoCell key={label}>{label}</InfoCell>
                  ))}
                </InfoColumn>
                <InfoColumn>
                  {info.map(([label, value]) => (
                    <InfoCell key={label}>{value}</InfoCell>
                  ))}
                </InfoColumn>
              </InfoGrid>
            </Column>

            <Column>
              <Card $accent={GREEN}>
                <CardTabs />
                <Section $top={44}>
                  <SectionTitle>
                    Team X Batting: <Strong>92/2 in 8.5</Strong>
                  </SectionTitle>
                  <ScoreTable $mt={25}>
                    <TableRow $cols={BATTING_COLS} $head>
                      <span>Batsmen</span>
                      <span>R</span>
                      <span>4s</span>
                      <span>6s</span>
                      <span>SR</span>
                    </TableRow>
                    {batting.map((row) => (
                      <TableRow $cols={BATTING_COLS} key={row[0]}>
                        {row.map((cell, i) => (
                          <span key={i}>{cell}</span>
                        ))}
                      </TableRow>
                    ))}
                  </ScoreTable>
                  <Summary>
                    Fours: <Strong>2</Strong>, Sixes: <Strong>1</Strong>, Extras: <Strong>9</Strong>
                  </Summary>
                </Section>
                <Rule $mt={35} />
                <Section $top={24}>
                  <SectionTitle>Team X Bowling:</SectionTitle>
                  <ScoreTable $mt={26}>
                    <TableRow $cols={BOWLING_COLS} $head>
                      <span>Bowler</span>
                      <span>O</span>
                      <span>M</span>
                      <span>R</span>
                      <span>W</span>
                      <span>Econ</span>
                      <span>Extras</span>
                    </TableRow>
                    {bowling.map((row, r) => (
                      <TableRow $cols={BOWLING_COLS} key={r}>
                        {row.map((cell, i) => (
                          <span key={i}>{cell}</span>
                        ))}
                      </TableRow>
                    ))}
                  </ScoreTable>
                </Section>
                <Rule $mt={19} />
                <Section $top={18} />
              </Card>
              <Card $accent={GREEN}>
                <CardTabs />
                <Section $top={37} $bottom={40}>
                  <InningsRow>
                    <InningsLink $on>Team X 1st Innings</InningsLink>
                    <InningsLink>Team X 2nd Innings</InningsLink>
                  </InningsRow>
                  <InningsRow>
                    <InningsLink>Team Y 1st Innings</InningsLink>
                    <InningsLink>Team Y 2nd Innings</InningsLink>
                  </InningsRow>
                </Section>
              </Card>
            </Column>
          </Columns>
        </Page>
        <Scrollbar>
          <ScrollArrow $up />
          <ScrollThumb />
          <ScrollSpacer />
          <ScrollArrow />
        </Scrollbar>
        <PoweredBadge>
          <ShieldLogo />
          <BadgeText>
            Powered By
            <BadgeStrong>CRICKET API</BadgeStrong>
          </BadgeText>
        </PoweredBadge>
      </Viewport>

      <Taskbar>
        <Weather>
          <UmbrellaIcon />
          <WeatherText>
            28°C
            <WeatherSub>Rain to stop</WeatherSub>
          </WeatherText>
        </Weather>
        {taskItems.map((t, i) => (
          <TaskItem key={i} $active={t.active}>
            {t.icon}
            {t.running && <RunDot $active={t.active} />}
          </TaskItem>
        ))}
        <Tray>
          <ChevronUp size={22} strokeWidth={1.2} />
          <TrayLines>
            <span>ENG</span>
            <span>IN</span>
          </TrayLines>
          <TrayIcons>
            <WifiIcon />
            <SpeakerIcon />
            <BatteryIcon />
          </TrayIcons>
          <TrayLines $right>
            <span>19:25</span>
            <span>29-07-2022</span>
          </TrayLines>
          <MoonIcon />
        </Tray>
      </Taskbar>
    </Shell>
  );
};

export default App;
